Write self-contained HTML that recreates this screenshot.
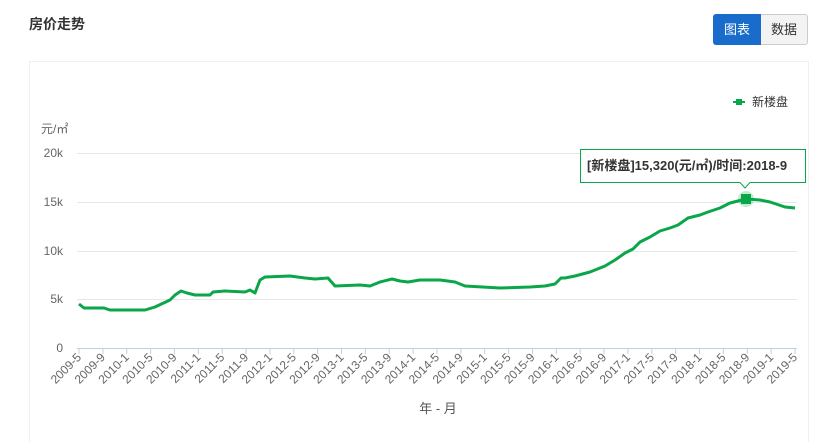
<!DOCTYPE html>
<html><head><meta charset="utf-8"><style>
body{margin:0;width:825px;height:432px;background:#fff;font-family:"Liberation Sans","Noto Sans CJK SC",sans-serif;position:relative;overflow:hidden}
.t{position:absolute;left:29px;top:14px;font-size:14px;font-weight:bold;color:#333}
.b1{position:absolute;left:713px;top:14px;width:48px;height:31px;background:#1a6ccc;color:#fff;font-size:13px;line-height:31px;text-align:center;border-radius:3px 0 0 3px}
.b2{position:absolute;left:761px;top:14px;width:46px;height:29px;background:#f3f3f3;border:1px solid #ccc;border-left:none;color:#333;font-size:13px;line-height:29px;text-align:center;border-radius:0 3px 3px 0}
.card{position:absolute;left:29px;top:61px;width:778px;height:380px;border:1px solid #f0f0f0;border-bottom:none}
svg{position:absolute;left:0;top:0}
</style></head><body>
<div class="t">房价走势</div>
<div class="b1">图表</div><div class="b2">数据</div>
<div class="card"></div>
<svg width="825" height="432" font-family="Liberation Sans, Noto Sans CJK SC, sans-serif">
<g stroke="#e6e6e6" stroke-width="1">
<line x1="77" y1="153.5" x2="797" y2="153.5"/><line x1="77" y1="202.5" x2="797" y2="202.5"/><line x1="77" y1="251.5" x2="797" y2="251.5"/><line x1="77" y1="299.5" x2="797" y2="299.5"/>
</g>
<line x1="77" y1="348.5" x2="797" y2="348.5" stroke="#c0d0e0"/>
<g font-size="12" fill="#666" text-anchor="end">
<text x="63" y="157">20k</text><text x="63" y="206">15k</text><text x="63" y="255">10k</text><text x="63" y="303">5k</text><text x="63" y="352">0</text>
</g>
<text x="41" y="133" font-size="12" fill="#666">元/㎡</text>
<text x="438" y="413" font-size="13" fill="#555" text-anchor="middle">年 - 月</text>
<g id="ticks"></g>
<line x1="733" y1="102" x2="745" y2="102" stroke="#0aa64a" stroke-width="2"/><rect x="736" y="99" width="6" height="6" fill="#0aa64a"/>
<text x="752" y="106" font-size="12" fill="#333">新楼盘</text>
<polyline fill="none" stroke="#0aa64a" stroke-width="3" stroke-linejoin="round" points="79,304 84,308 104,308 110,310 145,310 155,307 170,300 175,295 181,291 187,293 195,295 210,295 213,292 225,291 245,292 250,290 255,293 260,280 265,277 290,276 305,278 315,279 328,278 335,286 360,285 370,286 380,282 392,279 400,281 408,282 420,280 440,280 455,282 465,286 500,288 530,287 545,286 555,284 561,278 565,278 575,276 590,272 605,266 615,260 625,253 633,249 640,242 650,237 660,231 670,228 678,225 688,218 700,215 708,212 720,208 730,203 746,199 760,200 770,202 785,207 795,208"/>
<circle cx="746" cy="199" r="8" fill="#0aa64a" opacity="0.25"/>
<rect x="741" y="194" width="10" height="10" fill="#0aa64a"/>
<path d="M580.5 149.5H805.5V182.5H750L745 188L740 182.5H580.5Z" fill="#fff" stroke="#0aa64a"/>
<text x="587" y="170" font-size="13" font-weight="bold" fill="#333">[新楼盘]15,320(元/㎡)/时间:2018-9</text>
</svg>
<script>
var g=document.getElementById('ticks'),s='';
for(var i=0;i<=30;i++){var x=79+i*716/30;var m=5+4*i;var y=2009+Math.floor((m-1)/12);var mo=((m-1)%12)+1;
s+='<line x1="'+x+'" y1="348" x2="'+x+'" y2="354" stroke="#c0d0e0"/>';
s+='<text font-size="12" fill="#666" text-anchor="end" transform="translate('+(x+3)+',358) rotate(-45)">'+y+'-'+mo+'</text>';}
g.innerHTML=s;
</script>
</body></html>
